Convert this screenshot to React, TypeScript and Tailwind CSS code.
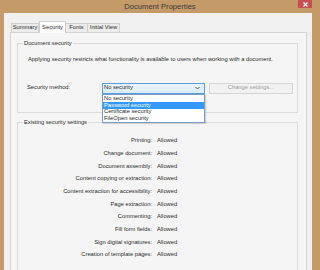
import React from "react";

const rows = [
  "Printing:",
  "Change document:",
  "Document assembly:",
  "Content copying or extraction:",
  "Content extraction for accessibility:",
  "Page extraction:",
  "Commenting:",
  "Fill form fields:",
  "Sign digital signatures:",
  "Creation of template pages:",
];

export default function App() {
  return (
    <div
      className="w-[320px] h-[270px] overflow-hidden bg-[#c39a68] flex flex-col text-[#2a2a2a]"
      style={{ fontFamily: '"Liberation Sans", Arial, sans-serif' }}
    >
      {/* title bar */}
      <div className="relative h-[13px] shrink-0 flex items-center justify-center">
        <span className="text-[7.6px] leading-none text-[#3a3a3a] pt-[1px]">Document Properties</span>
        <div className="absolute right-[8px] top-0 w-[14px] h-[8px] bg-[#c75050] flex items-center justify-center">
          <svg width="5" height="5" viewBox="0 0 5 5">
            <path d="M0.5 0.5L4.5 4.5M4.5 0.5L0.5 4.5" stroke="#fff" strokeWidth="1.2" />
          </svg>
        </div>
      </div>
      {/* client */}
      <div className="flex-1 ml-[4px] mr-[8px] bg-[#f0f0f0] pt-[7px] pl-[6px] pr-[5px] flex flex-col">
        {/* tabs */}
        <div className="flex items-end h-[12px] pl-[1px] text-[5.75px] leading-none">
          <div className="h-[9px] w-[28px] border border-b-0 border-[#cfcfcf] bg-[#ececec] flex items-center justify-center">
            Summary
          </div>
          <div className="h-[12px] w-[27px] border border-b-0 border-[#cfcfcf] bg-white flex items-center justify-center -mb-px relative z-10">
            Security
          </div>
          <div className="h-[9px] w-[22px] border border-b-0 border-l-0 border-[#cfcfcf] bg-[#ececec] flex items-center justify-center">
            Fonts
          </div>
          <div className="h-[9px] w-[32px] border border-b-0 border-l-0 border-[#cfcfcf] bg-[#ececec] flex items-center justify-center">
            Initial View
          </div>
        </div>
        {/* panel */}
        <div className="flex-1 border border-[#d4d4d4] bg-[#f5f5f5] pl-[6px] pr-[8px] pt-[10px] text-[5.75px] leading-none">
          {/* group 1 */}
          <div className="relative border border-[#dcdcdc] h-[70px]">
            <span className="absolute left-[5px] top-[-3px] bg-[#f5f5f5] px-[1px]">Document security</span>
            <div className="pl-[10px] pt-[13px]">
              Applying security restricts what functionality is available to users when working with a document.
            </div>
            <div className="flex items-center mt-[20px] pl-[9px]">
              <span className="w-[75px]">Security method:</span>
              <div className="relative">
                <div className="w-[103px] h-[11px] border border-[#569de5] bg-gradient-to-b from-[#eaf4fc] to-[#dcecfc] flex items-center justify-between px-[1px]">
                  <span>No security</span>
                  <svg width="5" height="4" viewBox="0 0 5 4" className="mr-[3px]">
                    <path d="M0.5 1L2.5 3L4.5 1" stroke="#444" strokeWidth="0.9" fill="none" />
                  </svg>
                </div>
                <div className="absolute left-0 top-[11px] w-[103px] h-[29px] border border-[#7a9cc8] bg-white z-20 flex flex-col pt-[1px] shadow-[1px_1px_1px_rgba(0,0,0,0.15)]">
                  <div className="h-[6.5px] flex items-center pl-[1px]">No security</div>
                  <div className="h-[6.5px] flex items-center pl-[1px] bg-[#3399ff] text-white">Password security</div>
                  <div className="h-[6.5px] flex items-center pl-[1px]">Certificate security</div>
                  <div className="h-[6.5px] flex items-center pl-[1px]">FileOpen security</div>
                </div>
              </div>
              <div className="ml-[4px] w-[84px] h-[11px] border border-[#d5d5d5] bg-[#f2f2f2] flex items-center justify-center text-[#9a9a9a]">
                Change settings...
              </div>
            </div>
          </div>
          {/* group 2 */}
          <div className="relative border border-[#dcdcdc] mt-[9px] h-[200px]">
            <span className="absolute left-[5px] top-[-3px] bg-[#f5f5f5] px-[1px]">Existing security settings</span>
            <div className="pt-[12px] flex flex-col">
              {rows.map((r) => (
                <div key={r} className="h-[12.67px] flex items-center">
                  <span className="w-[134px] text-right">{r}</span>
                  <span className="ml-[5px]">Allowed</span>
                </div>
              ))}
            </div>
          </div>
        </div>
      </div>
    </div>
  );
}
